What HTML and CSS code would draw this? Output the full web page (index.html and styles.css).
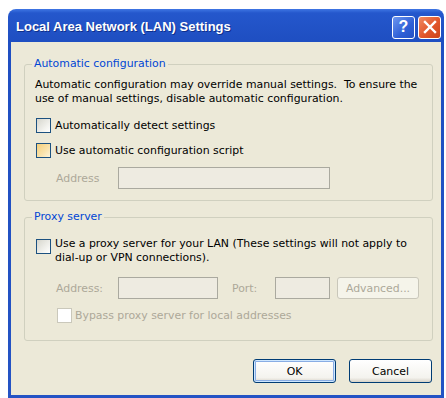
FILE: index.html
```html
<!DOCTYPE html>
<html lang="en">

<head>
    <meta charset="UTF-8">
    <title>Local Area Network (LAN) Settings</title>
    <link rel="stylesheet" href="styles.css">
</head>

<body>
    <div class="window">
        <div class="titlebar">
            <span class="title">Local Area Network (LAN) Settings</span>
            <div class="caption-buttons">
                <div class="cap help">?</div>
                <div class="cap close">
                    <svg width="14" height="14" viewBox="0 0 14 14">
                        <path d="M2 2 L12 12 M12 2 L2 12" stroke="#fff" stroke-width="2.4" stroke-linecap="square" />
                    </svg>
                </div>
            </div>
        </div>

        <div class="client">
            <fieldset class="group group-auto">
                <legend>Automatic configuration</legend>
                <p class="note">Automatic configuration may override manual settings.&nbsp; To ensure the<br>use of manual settings, disable automatic configuration.</p>
                <label class="check first"><span class="box"></span>Automatically detect settings</label>
                <label class="check"><span class="box hot"></span>Use automatic configuration script</label>
                <div class="field-row disabled">
                    <span class="field-label">Address</span>
                    <span class="edit edit-wide"></span>
                </div>
            </fieldset>

            <fieldset class="group group-proxy">
                <legend>Proxy server</legend>
                <label class="check two-line"><span class="box"></span><span>Use a proxy server for your LAN (These settings will not apply to<br>dial-up or VPN connections).</span></label>
                <div class="field-row disabled proxy-row">
                    <span class="field-label">Address:</span>
                    <span class="edit edit-addr"></span>
                    <span class="field-label port-label">Port:</span>
                    <span class="edit edit-port"></span>
                    <span class="btn btn-disabled">Advanced...</span>
                </div>
                <label class="check bypass disabled"><span class="box"></span>Bypass proxy server for local addresses</label>
            </fieldset>

            <div class="actions">
                <span class="btn btn-default">OK</span>
                <span class="btn">Cancel</span>
            </div>
        </div>
    </div>
</body>

</html>
```

FILE: styles.css
```css
body {
    margin: 0;
    padding: 0;
    background-color: #fff;
    font-family: "DejaVu Sans", Verdana, sans-serif;
    font-size: 10.9px;
    color: #000;
}

.window {
    margin: 9px 0 0 8px;
    width: 436px;
    height: 389px;
    box-sizing: border-box;
    padding: 0 3px 3px;
    display: flex;
    flex-direction: column;
    background: linear-gradient(#3f76e4 0px, #2457cc 4px, #1f4fc2 30px, #2453c4 100%);
    border-radius: 8px 8px 0 0;
}

.titlebar {
    height: 33px;
    flex: none;
    display: flex;
    align-items: center;
    justify-content: space-between;
    padding: 0 0 0 5px;
}

.title {
    color: #fff;
    font-family: "Liberation Sans", Arial, sans-serif;
    font-weight: bold;
    font-size: 13px;
    text-shadow: 1px 1px 0 #0f2f8a;
    padding-top: 2px;
}

.caption-buttons {
    display: flex;
    gap: 3px;
    padding-top: 3px;
}

.cap {
    width: 21px;
    height: 21px;
    border: 1px solid #fff;
    border-radius: 3px;
    display: flex;
    align-items: center;
    justify-content: center;
    color: #fff;
    font-family: "Liberation Sans", Arial, sans-serif;
    font-weight: bold;
    font-size: 16px;
}

.help {
    background: linear-gradient(135deg, #6d97f0, #2e5fd6 60%, #2451c4);
}

.close {
    background: linear-gradient(135deg, #f08a62, #e2552a 55%, #cc4419);
}

.client {
    flex: 1;
    background-color: #ece9d8;
    padding: 15px 8px 0 13px;
}

.group {
    margin: 0;
    padding: 0 10px 0 10px;
    border: 1px solid #d0d0bf;
    border-radius: 3px;
    min-width: 0;
}

.group legend {
    color: #0046d5;
    padding: 0 2px;
    margin-left: -3px;
    line-height: 14px;
}

.group-auto {
    padding-bottom: 11px;
}

.group-proxy {
    margin-top: 9px;
    padding-bottom: 17px;
}

.note {
    margin: 7px 0 0;
    line-height: 14px;
}

.check {
    display: flex;
    align-items: center;
    height: 16px;
    margin-top: 9px;
}

.check.first {
    margin-top: 11px;
}

.check.two-line {
    height: auto;
    align-items: flex-start;
    margin-top: 13px;
    line-height: 14px;
}

.check.two-line .box {
    margin-top: 2px;
}

.box {
    width: 13px;
    height: 13px;
    flex: none;
    margin: 0 4px 0 1px;
    border: 1px solid #1c5180;
    background: linear-gradient(135deg, #d6d6cd, #f4f4f0 70%, #fff);
}

.box.hot {
    background: linear-gradient(135deg, #f5cf7a, #f9e3ae 60%, #fdf4da);
}

.field-row {
    display: flex;
    align-items: center;
    margin-top: 9px;
    padding-left: 21px;
}

.disabled {
    color: #aca899;
}

.field-label {
    width: 62px;
}

.edit {
    height: 22px;
    box-sizing: border-box;
    border: 1px solid #aaa99f;
    background-color: #eeebe1;
}

.edit-wide {
    width: 212px;
}

.proxy-row {
    margin-top: 12px;
}

.edit-addr {
    width: 100px;
}

.port-label {
    width: 43px;
    margin-left: 14px;
}

.edit-port {
    width: 55px;
}

.btn {
    display: inline-flex;
    align-items: center;
    justify-content: center;
    box-sizing: border-box;
    width: 83px;
    height: 24px;
    border: 1px solid #003c74;
    border-radius: 3px;
    background: linear-gradient(#ffffff, #f4f3ee 80%, #d8d3c8);
    color: #000;
}

.btn-disabled {
    width: 82px;
    height: 22px;
    margin-left: 7px;
    border-color: #c9c7ba;
    background: #f5f4ea;
    color: #aca899;
}

.check.bypass {
    margin-top: 8px;
    padding-left: 21px;
}

.bypass .box {
    border-color: #cac8bb;
    background: #fff;
    margin-right: 3px;
}

.actions {
    display: flex;
    justify-content: flex-end;
    gap: 13px;
    margin-top: 18px;
    padding-right: 1px;
}

.btn-default {
    box-shadow: inset 0 0 0 1px #cee7ff, inset 0 0 0 2px #89ade4;
}
```
